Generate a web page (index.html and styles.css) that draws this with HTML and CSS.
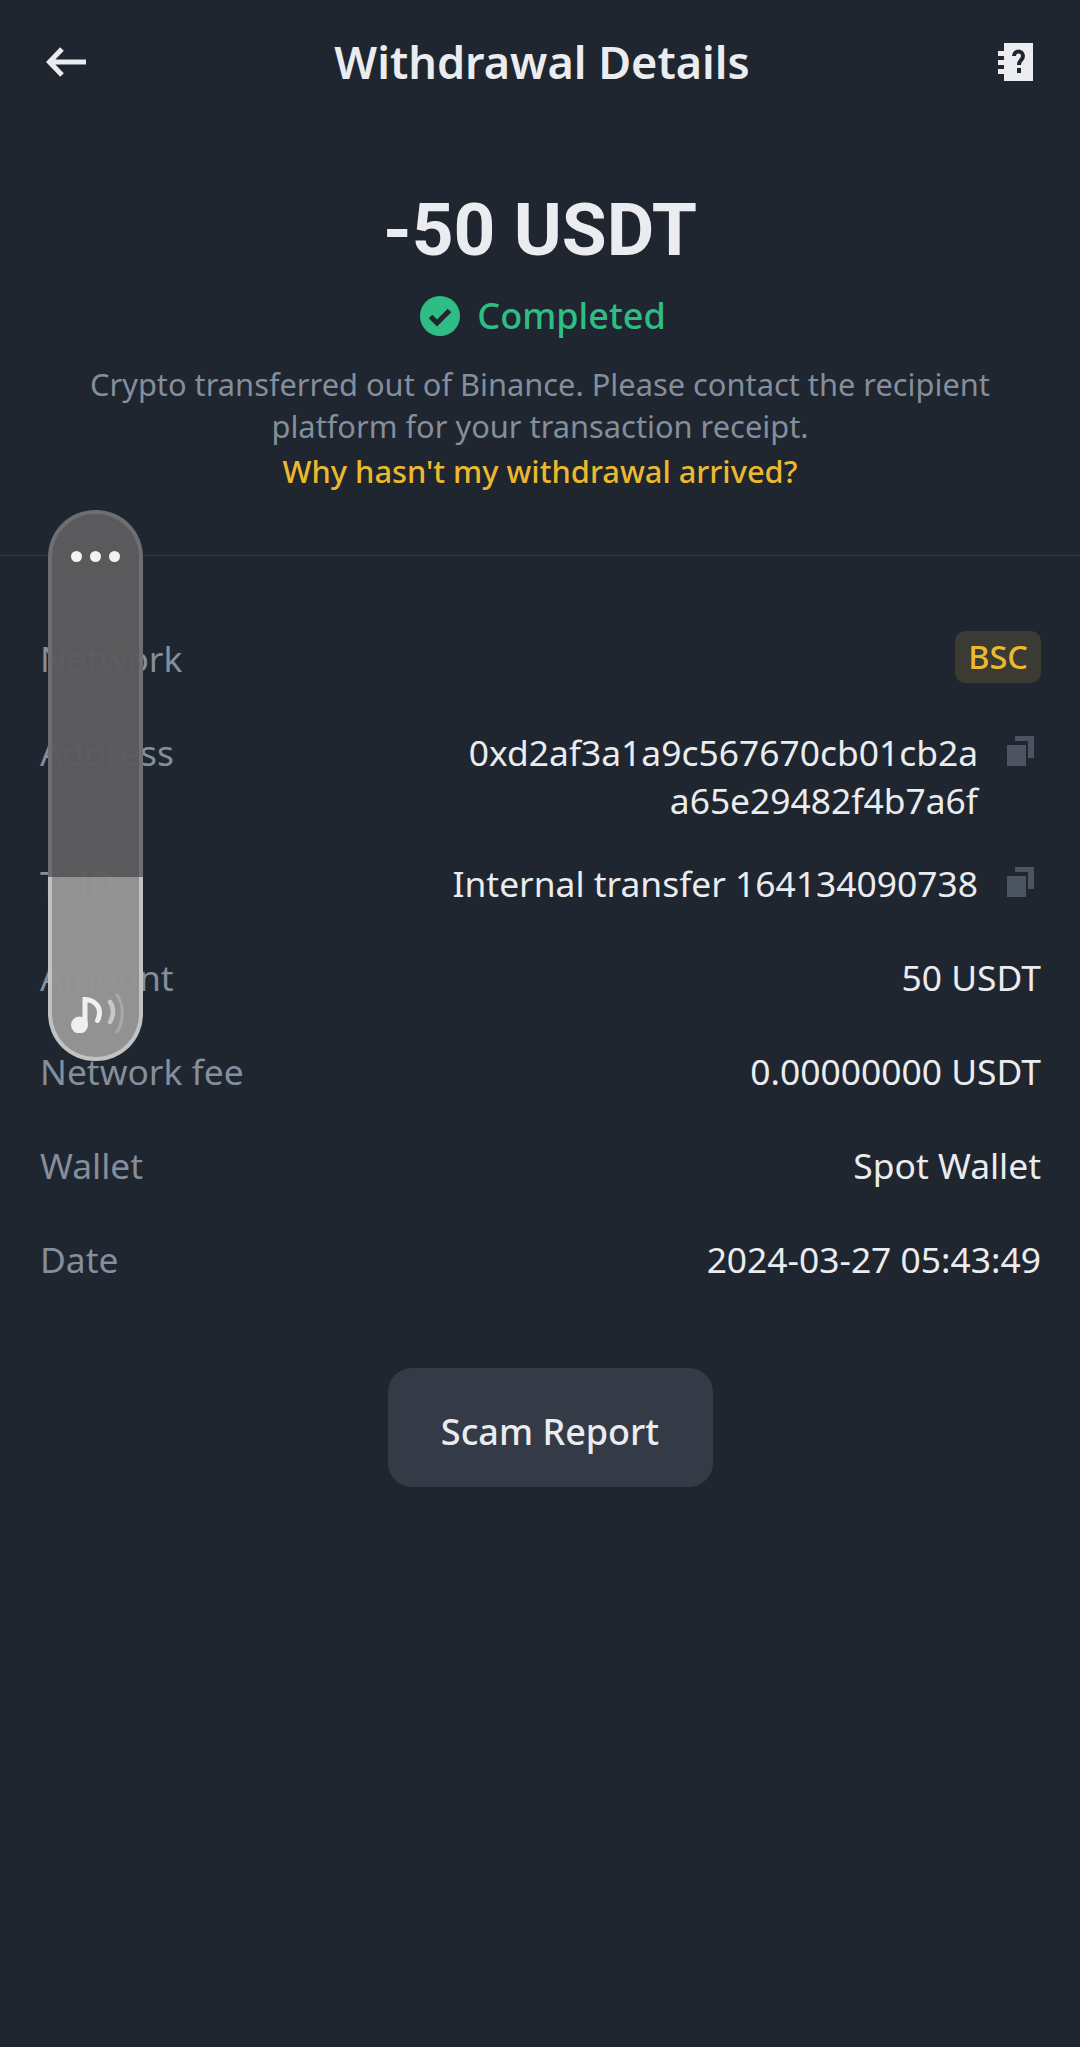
FILE: index.html
```html
<!DOCTYPE html>
<html lang="en">
<head>
    <meta charset="UTF-8" />
    <title>Withdrawal Details</title>
    <link rel="stylesheet" href="styles.css">
</head>
<body>
    <div class="page">
        <header class="topbar">
            <svg class="back-icon" viewBox="0 0 40 30" aria-hidden="true">
                <path d="M16 2 3.500 15 16 28M4 15h36" fill="none" stroke="#eaecef" stroke-width="5"/>
            </svg>
            <h1>Withdrawal Details</h1>
            <svg class="help-icon" viewBox="0 0 35 38" aria-hidden="true">
                <path d="M6 0h29v38H6zM0 8h6v5H0zM0 17h6v5H0zM0 26h6v5H0z" fill="#eaecef"/>
                <path d="M16 13c0-6 9-6 9 0 0 4-4 4-4 9" fill="none" stroke="#1f262f" stroke-width="4"/>
                <path d="M19 25h4v5h-4z" fill="#1f262f"/>
            </svg>
        </header>

        <section class="summary">
            <div class="amount">-50 USDT</div>
            <div class="status">
                <svg class="status-icon" viewBox="0 0 40 40" aria-hidden="true">
                    <circle cx="20" cy="20" r="20" fill="#2ebd85"/>
                    <path d="M10.500 20.500 17 27 29.500 14.500" fill="none" stroke="#1f262f" stroke-width="5"/>
                </svg>
                <span>Completed</span>
            </div>
            <p class="note">Crypto transferred out of Binance. Please contact the recipient platform for your transaction receipt.</p>
            <a class="help-link" href="#">Why hasn't my withdrawal arrived?</a>
        </section>

        <section class="details">
            <div class="row">
                <span class="label">Network</span>
                <span class="badge">BSC</span>
            </div>
            <div class="row row-tall">
                <span class="label">Address</span>
                <div class="value-copy">
                    <span class="value value-wrap">0xd2af3a1a9c567670cb01cb2a a65e29482f4b7a6f</span>
                    <svg class="copy-icon" viewBox="0 0 27 30" aria-hidden="true">
                        <path d="M0 9h19v21H0z" fill="#4c5361"/>
                        <path d="M8 0h19v22h-6V5H8z" fill="#4c5361"/>
                    </svg>
                </div>
            </div>
            <div class="row">
                <span class="label">TxID</span>
                <div class="value-copy">
                    <span class="value">Internal transfer 164134090738</span>
                    <svg class="copy-icon" viewBox="0 0 27 30" aria-hidden="true">
                        <path d="M0 9h19v21H0z" fill="#4c5361"/>
                        <path d="M8 0h19v22h-6V5H8z" fill="#4c5361"/>
                    </svg>
                </div>
            </div>
            <div class="row">
                <span class="label">Amount</span>
                <span class="value">50 USDT</span>
            </div>
            <div class="row">
                <span class="label">Network fee</span>
                <span class="value">0.00000000 USDT</span>
            </div>
            <div class="row">
                <span class="label">Wallet</span>
                <span class="value">Spot Wallet</span>
            </div>
            <div class="row">
                <span class="label">Date</span>
                <span class="value">2024-03-27 05:43:49</span>
            </div>
        </section>

        <div class="actions">
            <button class="scam-btn">Scam Report</button>
        </div>
    </div>

    <!-- floating volume panel, sits over the detail rows -->
    <div class="volume">
        <div class="volume-top">
            <i></i><i></i><i></i>
        </div>
        <div class="volume-level">
            <svg class="music-icon" viewBox="0 0 56 40" aria-hidden="true">
                <circle cx="10.500" cy="32" r="8.500" fill="#f0f0f0"/>
                <path d="M16 31V6.500c8 0 14.500 6 14.500 13 0 3-.5 5-2 8" fill="none" stroke="#f0f0f0" stroke-width="5" stroke-linecap="round"/>
                <path d="M41 9c4 5 4 13 0 20" fill="none" stroke="#c8c8c8" stroke-width="4.500" stroke-linecap="round"/>
                <path d="M48 2c7 10 7 26 0 37" fill="none" stroke="#a9a9a9" stroke-width="3" stroke-linecap="round"/>
            </svg>
        </div>
    </div>
</body>
</html>
```

FILE: styles.css
```css
html, body {
    height: 100%;
}

body {
    margin: 0;
    background-color: #1f262f;
    font-family: "Noto Sans", sans-serif;
    color: #eaecef;
    position: relative;
    overflow: hidden;
}

.page {
    box-sizing: border-box;
    height: 2047px;
}

.topbar {
    display: flex;
    align-items: center;
    justify-content: space-between;
    height: 124px;
    padding: 0 47px 0 46px;
    box-sizing: border-box;
}

.topbar h1 {
    margin: 0;
    font-size: 45px;
    font-weight: 600;
    line-height: 60px;
}

.back-icon {
    width: 40px;
    height: 30px;
}

.help-icon {
    width: 35px;
    height: 38px;
}

.summary {
    display: flex;
    flex-direction: column;
    align-items: center;
    height: 432px;
    padding: 0 40px;
    box-sizing: border-box;
    border-bottom: 1px solid #333a45;
    text-align: center;
}

.amount {
    margin-top: 66px;
    font-family: Roboto, sans-serif;
    font-size: 73px;
    font-weight: 700;
    line-height: 80px;
}

.status {
    display: flex;
    align-items: center;
    gap: 17px;
    margin-top: 22px;
    padding-left: 6px;
    color: #2ebd85;
    font-size: 36px;
    font-weight: 500;
    line-height: 48px;
}

.status-icon {
    width: 40px;
    height: 40px;
}

.note {
    width: 930px;
    margin: 23px 0 0;
    color: #848e9c;
    font-size: 30.800px;
    line-height: 42px;
}

.help-link {
    margin-top: 3px;
    color: #ebb92d;
    font-size: 30.800px;
    font-weight: 500;
    line-height: 42px;
    text-decoration: none;
}

.details {
    padding: 78px 39px 0 40px;
}

.row {
    display: flex;
    align-items: flex-start;
    justify-content: space-between;
    min-height: 94px;
    font-size: 35.400px;
    line-height: 48px;
}

.row-tall {
    min-height: 131px;
}

.label {
    color: #848e9c;
}

.value {
    text-align: right;
}

.value-wrap {
    width: 530px;
}

.value-copy {
    display: flex;
    align-items: flex-start;
    gap: 29px;
}

.copy-icon {
    flex: none;
    width: 27px;
    height: 30px;
    margin-top: 8px;
    margin-right: 7px;
}

.badge {
    margin-top: -3px;
    padding: 2px 13px;
    border-radius: 10px;
    background-color: #3b3a33;
    color: #ebb92d;
    font-size: 32.500px;
    font-weight: 500;
}

.actions {
    display: flex;
    justify-content: center;
    margin-top: 39px;
    padding-left: 20px;
}

.scam-btn {
    width: 325px;
    height: 119px;
    padding-top: 8px;
    border: 0;
    border-radius: 24px;
    background-color: #343a46;
    color: #eaecef;
    font-family: inherit;
    font-size: 36px;
    font-weight: 500;
}

.volume {
    position: absolute;
    left: 48px;
    top: 510px;
    width: 95px;
    height: 551px;
    display: flex;
    flex-direction: column;
}

.volume-top {
    flex: 1;
    box-sizing: border-box;
    display: flex;
    justify-content: center;
    gap: 8px;
    padding-top: 37px;
    border: 4px solid #6d6e72;
    border-bottom: 0;
    border-radius: 47px 47px 0 0;
    background-color: rgba(92, 92, 94, 0.97);
}

.volume-top i {
    width: 11px;
    height: 11px;
    border-radius: 50%;
    background-color: #f2f2f2;
}

.volume-level {
    box-sizing: border-box;
    display: flex;
    align-items: flex-end;
    justify-content: center;
    height: 184px;
    padding-bottom: 24px;
    padding-left: 3px;
    border: 4px solid #c2c2c2;
    border-top: 0;
    border-radius: 0 0 47px 47px;
    background-color: rgba(148, 148, 148, 0.985);
}

.music-icon {
    width: 56px;
    height: 40px;
}
```
